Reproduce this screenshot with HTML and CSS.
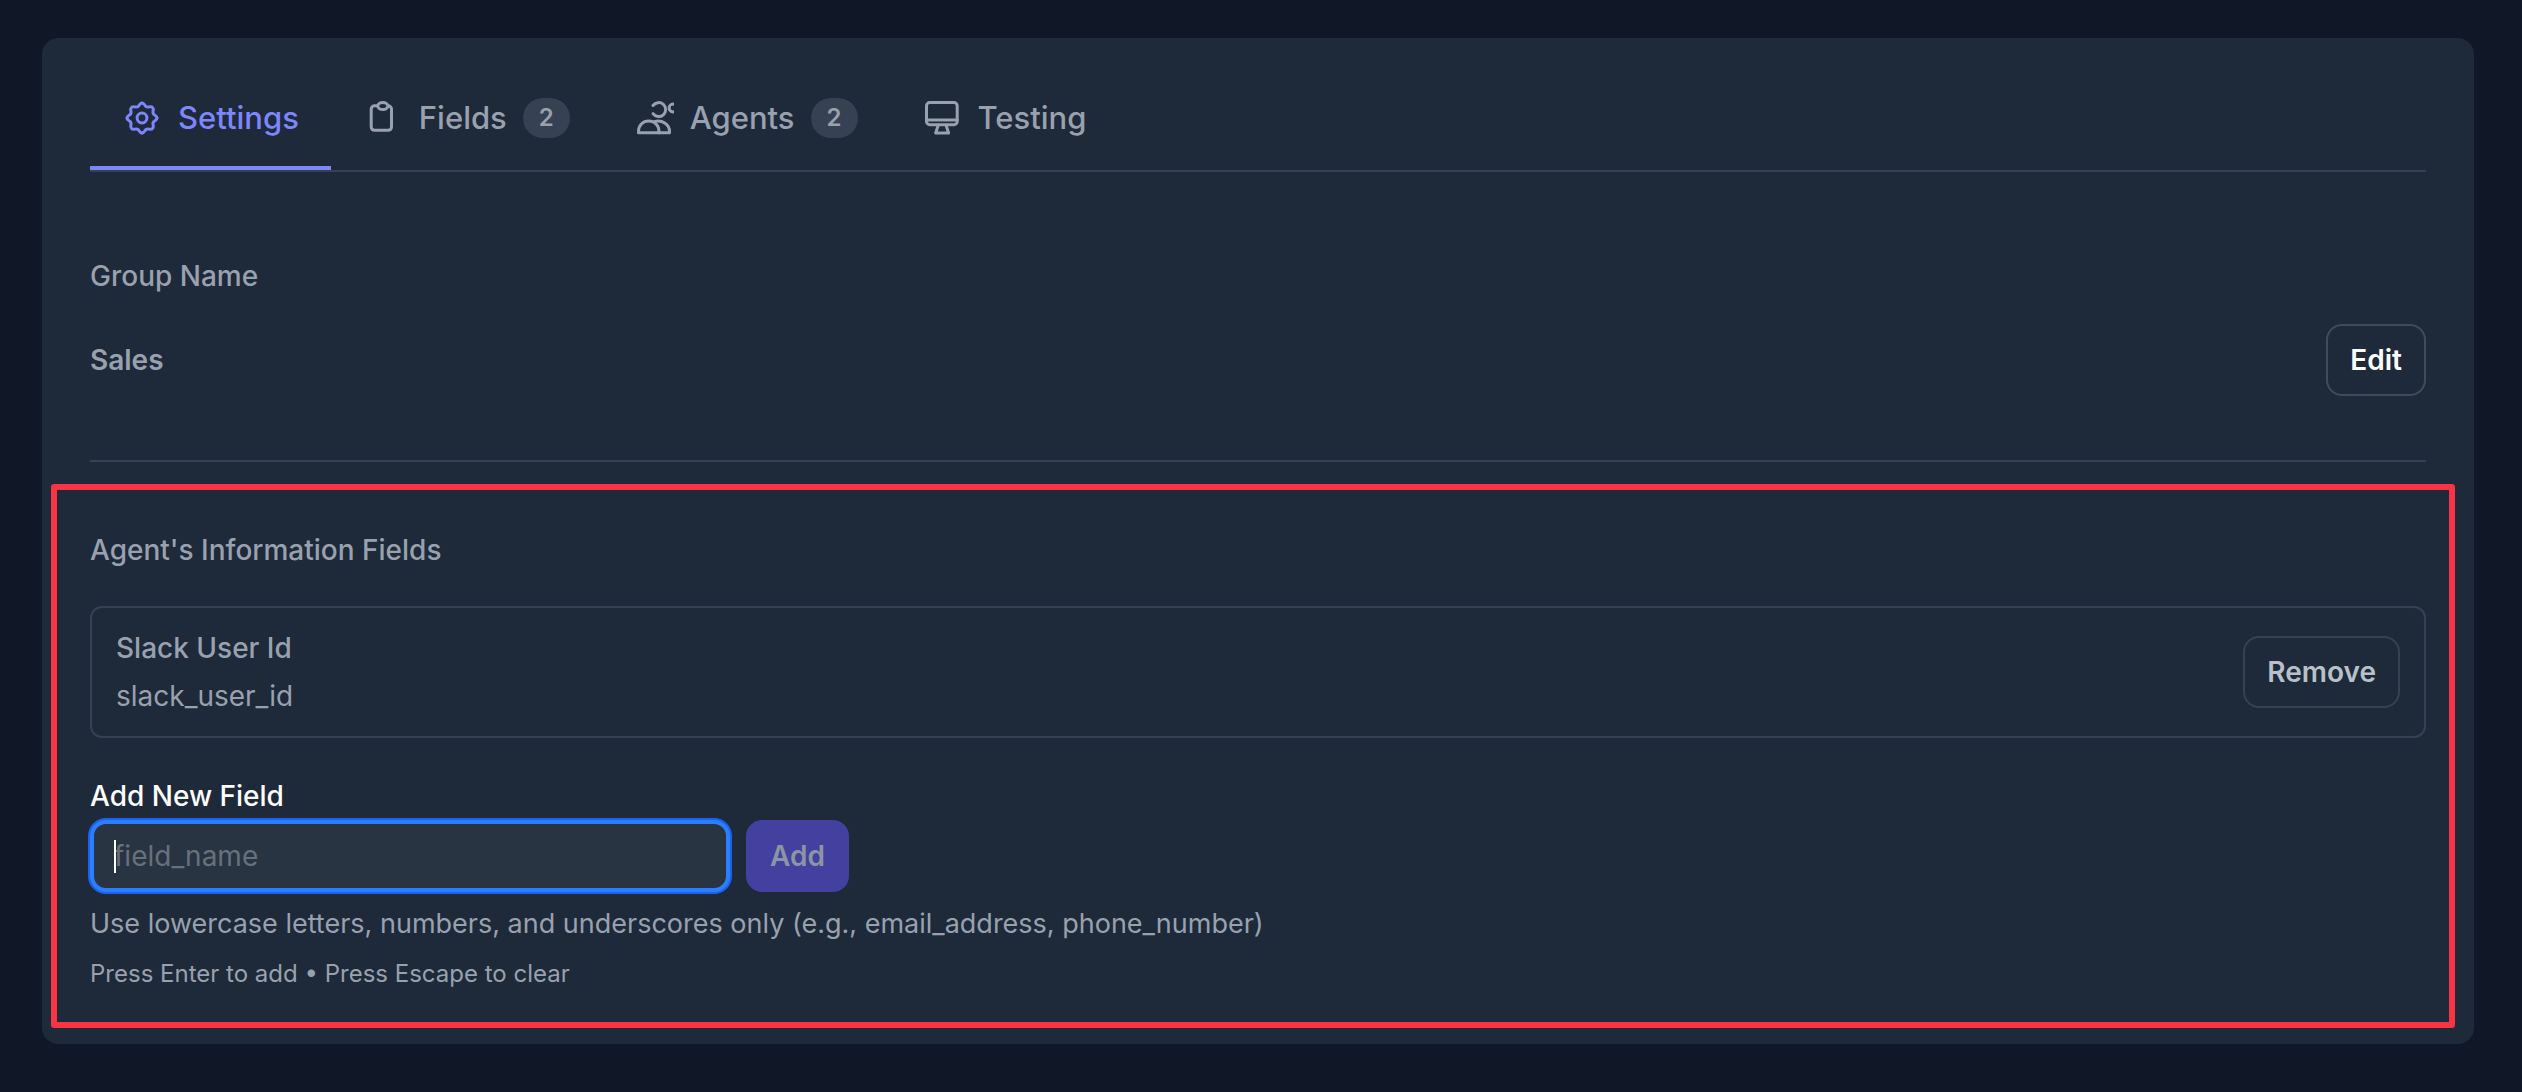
FILE: index.html
```html
<!DOCTYPE html>
<html lang="en">
<head>
    <meta charset="UTF-8">
    <meta name="viewport" content="width=device-width, initial-scale=1.0">
    <title>Group Settings</title>
    <link rel="stylesheet" href="styles.css">
</head>
<body>
    <main class="card">
        <nav class="tabs">
            <a class="tab active" href="#settings">
                <svg class="icon" viewBox="0 0 40 40">
                    <path d="M20 5C21.6 5 22.2 6.2 23 7.4C23.8 8.8 25.4 9.3 27 8.9C28.5 8.5 29.7 8.6 30.5 9.5C31.4 10.3 31.5 11.5 31.1 13C30.7 14.6 31.2 16.2 32.6 17C33.8 17.8 35 18.4 35 20"/>
                    <path transform="rotate(90 20 20)" d="M20 5C21.6 5 22.2 6.2 23 7.4C23.8 8.8 25.4 9.3 27 8.9C28.5 8.5 29.7 8.6 30.5 9.5C31.4 10.3 31.5 11.5 31.1 13C30.7 14.6 31.2 16.2 32.6 17C33.8 17.8 35 18.4 35 20"/>
                    <path transform="rotate(180 20 20)" d="M20 5C21.6 5 22.2 6.2 23 7.4C23.8 8.8 25.4 9.3 27 8.9C28.5 8.5 29.7 8.6 30.5 9.5C31.4 10.3 31.5 11.5 31.1 13C30.7 14.6 31.2 16.2 32.6 17C33.8 17.8 35 18.4 35 20"/>
                    <path transform="rotate(270 20 20)" d="M20 5C21.6 5 22.2 6.2 23 7.4C23.8 8.8 25.4 9.3 27 8.9C28.5 8.5 29.7 8.6 30.5 9.5C31.4 10.3 31.5 11.5 31.1 13C30.7 14.6 31.2 16.2 32.6 17C33.8 17.8 35 18.4 35 20"/>
                    <circle cx="20" cy="20" r="4.9"/>
                </svg>
                <span>Settings</span>
            </a>
            <a class="tab" href="#fields">
                <svg class="icon" viewBox="0 0 40 40">
                    <path d="M14.5 7.8H11.5A3.3 3.3 0 0 0 8.2 11.1V29A3.3 3.3 0 0 0 11.5 32.3H25.2A3.3 3.3 0 0 0 28.5 29V11.1A3.3 3.3 0 0 0 25.2 7.8"/>
                    <ellipse cx="19.8" cy="8" rx="5" ry="3.6"/>
                </svg>
                <span>Fields</span>
                <span class="badge">2</span>
            </a>
            <a class="tab" href="#agents">
                <svg class="icon" viewBox="0 0 40 40">
                    <path d="M19 7.5A7 7 0 1 1 19 15.7"/>
                    <circle cx="39" cy="10" r="3.9"/>
                    <path d="M4.5 34.8V33.4C4.5 27.4 8.8 23.1 14.7 23.1C20.6 23.1 25 27.4 25 33.4V34.8Z"/>
                    <path d="M20.5 23.6C27.8 21.4 35.5 26.2 35.5 33.4V34.8H25"/>
                </svg>
                <span>Agents</span>
                <span class="badge">2</span>
            </a>
            <a class="tab" href="#testing">
                <svg class="icon" viewBox="0 0 40 40">
                    <rect x="4.5" y="4.5" width="30.7" height="22.2" rx="3.2"/>
                    <path d="M4.5 22H35.2M16.3 27L13.7 35H26.6L24 27"/>
                </svg>
                <span>Testing</span>
            </a>
        </nav>

        <section class="group" id="settings">
            <h2>Group Name</h2>
            <div class="group-row">
                <strong>Sales</strong>
                <button class="btn" type="button">Edit</button>
            </div>
        </section>

        <section class="agent-fields">
            <h2>Agent's Information Fields</h2>
            <div class="field-item">
                <div>
                    <p class="field-label">Slack User Id</p>
                    <p class="field-key">slack_user_id</p>
                </div>
                <button class="btn btn-remove" type="button">Remove</button>
            </div>

            <form class="add-form" onsubmit="return false">
                <label for="newField">Add New Field</label>
                <div class="add-row">
                    <div class="input-wrap">
                        <input id="newField" type="text" placeholder="field_name" autocomplete="off">
                    </div>
                    <button class="btn btn-add" type="submit" disabled>Add</button>
                </div>
                <p class="help">Use lowercase letters, numbers, and underscores only (e.g., email_address, phone_number)</p>
                <p class="hint">Press Enter to add • Press Escape to clear</p>
            </form>
        </section>
    </main>
</body>
</html>
```
FILE: styles.css
```css
* {
    box-sizing: border-box;
}

body {
    margin: 0;
    padding: 38px 48px 48px 42px;
    background-color: #101727;
    color: #99a1af;
    font-family: Inter, sans-serif;
    font-size: 28px;
    line-height: 40px;
}

h2, p {
    margin: 0;
    font-size: 28px;
    font-weight: 500;
}

.card {
    padding: 48px 48px 54px;
    background-color: #1e2939;
    border-radius: 16px;
}

/* tabs */
.tabs {
    display: flex;
    border-bottom: 2px solid #364153;
}

.tab {
    display: flex;
    align-items: center;
    gap: 16px;
    padding: 12px 32px 28px;
    border-bottom: 4px solid transparent;
    color: #99a1af;
    font-size: 31px;
    font-weight: 500;
    text-decoration: none;
}

.tab.active {
    color: #7c86ff;
    border-bottom-color: #7c86ff;
}

.icon {
    width: 40px;
    height: 40px;
    fill: none;
    stroke: currentColor;
    stroke-width: 3;
    stroke-linecap: round;
    stroke-linejoin: round;
    overflow: hidden;
}

.badge {
    padding: 0 16px;
    border-radius: 20px;
    background-color: #364153;
    font-size: 24px;
    font-weight: 600;
}

/* group name */
.group {
    padding: 84px 0 64px;
    border-bottom: 2px solid #364153;
}

.group-row {
    display: flex;
    align-items: center;
    justify-content: space-between;
    margin-top: 28px;
}

.group-row strong {
    font-weight: 600;
}

.btn {
    height: 72px;
    padding: 0 22px;
    border: 2px solid #414b5b;
    border-radius: 16px;
    background-color: transparent;
    color: #fff;
    font-family: inherit;
    font-size: 28px;
    font-weight: 600;
    cursor: pointer;
}

/* agent fields */
.agent-fields {
    position: relative;
    padding-top: 68px;
}

/* highlight frame */
.agent-fields::after {
    content: "";
    position: absolute;
    inset: 22px -29px -38px -39px;
    border: 6px solid #fb3445;
    border-radius: 3px;
    pointer-events: none;
}

.field-item {
    display: flex;
    align-items: center;
    justify-content: space-between;
    margin-top: 36px;
    padding: 20px 24px;
    border: 2px solid #364153;
    border-radius: 12px;
}

.field-key {
    margin-top: 8px;
    font-weight: 400;
}

.btn-remove {
    border-color: #364151;
    color: #b8c0ca;
}

.add-form {
    margin-top: 38px;
}

.add-form label {
    display: block;
    margin-bottom: 4px;
    color: #fff;
    font-weight: 500;
}

.add-row {
    display: flex;
    gap: 16px;
}

.input-wrap {
    position: relative;
    flex: 0 1 640px;
}

.input-wrap input {
    width: 100%;
    height: 72px;
    padding: 0 20px;
    border: 4px solid #2b7fff;
    border-radius: 16px;
    outline: none;
    box-shadow: 0 0 0 2px #1a62ee;
    background-color: #293442;
    color: #fff;
    font-family: inherit;
    font-size: 28px;
}

.input-wrap input::placeholder {
    color: #67707d;
    opacity: 1;
}

/* text cursor */
.input-wrap::after {
    content: "";
    position: absolute;
    top: 20px;
    left: 24px;
    width: 2px;
    height: 33px;
    background-color: #fff;
}

.btn-add {
    border-color: #4340a0;
    background-color: #4340a0;
    color: #8c95a3;
    cursor: default;
}

.help {
    margin-top: 12px;
    font-size: 27px;
    font-weight: 400;
}

.hint {
    margin-top: 14px;
    font-size: 24px;
    font-weight: 400;
    line-height: 32px;
}
```
